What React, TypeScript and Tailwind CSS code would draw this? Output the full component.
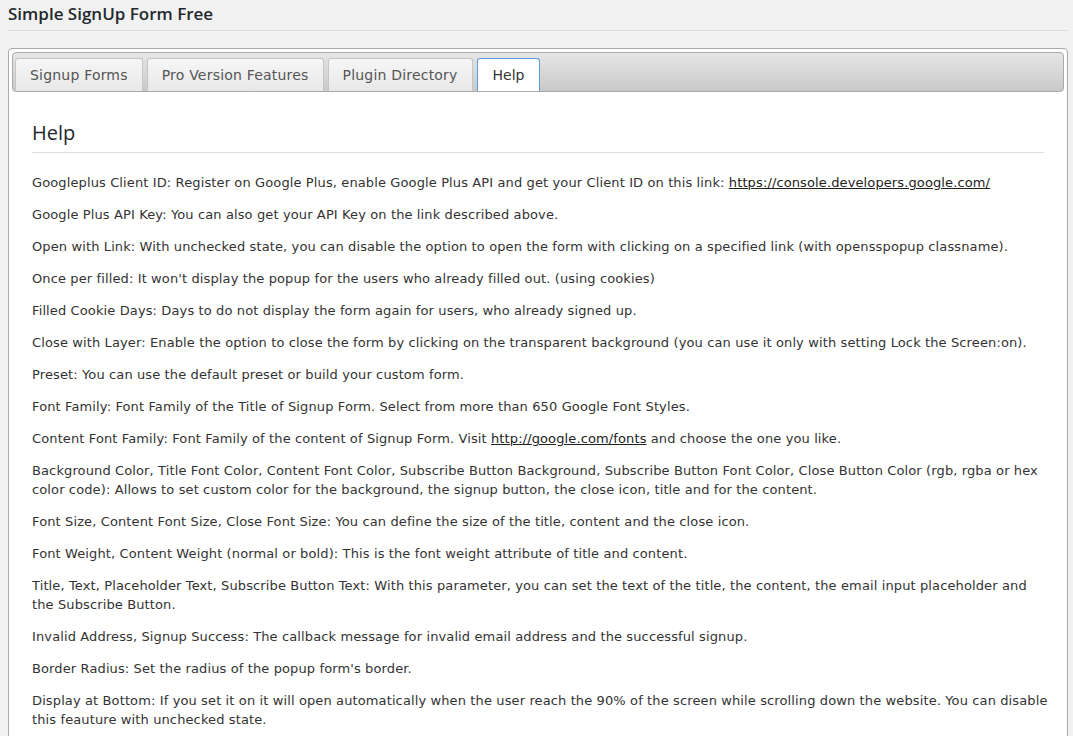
import React from "react"

const items: React.ReactNode[] = [
  <>Googleplus Client ID: Register on Google Plus, enable Google Plus API and get your Client ID on this link: <a className="underline text-[#222]" href="#">https://console.developers.google.com/</a></>,
  "Google Plus API Key: You can also get your API Key on the link described above.",
  "Open with Link: With unchecked state, you can disable the option to open the form with clicking on a specified link (with opensspopup classname).",
  "Once per filled: It won't display the popup for the users who already filled out. (using cookies)",
  "Filled Cookie Days: Days to do not display the form again for users, who already signed up.",
  "Close with Layer: Enable the option to close the form by clicking on the transparent background (you can use it only with setting Lock the Screen:on).",
  "Preset: You can use the default preset or build your custom form.",
  "Font Family: Font Family of the Title of Signup Form. Select from more than 650 Google Font Styles.",
  <>Content Font Family: Font Family of the content of Signup Form. Visit <a className="underline text-[#222]" href="#">http://google.com/fonts</a> and choose the one you like.</>,
  "Background Color, Title Font Color, Content Font Color, Subscribe Button Background, Subscribe Button Font Color, Close Button Color (rgb, rgba or hex color code): Allows to set custom color for the background, the signup button, the close icon, title and for the content.",
  "Font Size, Content Font Size, Close Font Size: You can define the size of the title, content and the close icon.",
  "Font Weight, Content Weight (normal or bold): This is the font weight attribute of title and content.",
  "Title, Text, Placeholder Text, Subscribe Button Text: With this parameter, you can set the text of the title, the content, the email input placeholder and the Subscribe Button.",
  "Invalid Address, Signup Success: The callback message for invalid email address and the successful signup.",
  "Border Radius: Set the radius of the popup form's border.",
  "Display at Bottom: If you set it on it will open automatically when the user reach the 90% of the screen while scrolling down the website. You can disable this feauture with unchecked state.",
]

const tabs = ["Signup Forms", "Pro Version Features", "Plugin Directory"]

export default function App() {
  return (
    <div className="h-[736px] overflow-hidden bg-[#f1f1f1] font-['DejaVu_Sans',Verdana,sans-serif] text-[#333]">
      <div className="pl-2 pr-[5px] pt-[3px]">
        <h1 className="font-['Open_Sans',sans-serif] text-[17px] font-semibold text-[#23282d] leading-[22px]">
          Simple SignUp Form Free
        </h1>
        <div className="mt-[5px] border-t border-[#dcdcdc]" />
        <div className="mt-[17px] rounded-[4px] border border-[#aaa] bg-white p-[3px]">
          <div className="flex h-[40px] items-end gap-[4px] rounded-[4px] border border-[#aaa] bg-gradient-to-b from-[#e6e6e6] to-[#c9c9c9] px-[2px]">
            {tabs.map((t) => (
              <div
                key={t}
                className="flex h-[33px] items-center rounded-t-[3px] border border-b-0 border-[#c5c5c5] bg-gradient-to-b from-[#f6f6f6] to-[#e8e8e8] px-[14px] text-[14px] tracking-[0.2px] text-[#555]"
              >
                {t}
              </div>
            ))}
            <div className="flex h-[33px] items-center rounded-t-[3px] border border-b-0 border-[#5b9dd9] bg-white px-[15px] text-[14px] text-[#333]">
              Help
            </div>
          </div>
          <div className="px-[20px] pt-[29px] pb-4">
            <h2 className="text-[20px] leading-[24px] text-[#23282d] font-['Open_Sans',sans-serif]">Help</h2>
            <div className="mt-[7px] border-t border-[#ddd]" />
            <div className="mt-[20px] -mr-[4px] flex flex-col gap-[13px] text-[13px] leading-[19px] tracking-[0.12px] text-[#333]">
              {items.map((it, i) => (
                <p key={i}>{it}</p>
              ))}
            </div>
          </div>
        </div>
      </div>
    </div>
  )
}
